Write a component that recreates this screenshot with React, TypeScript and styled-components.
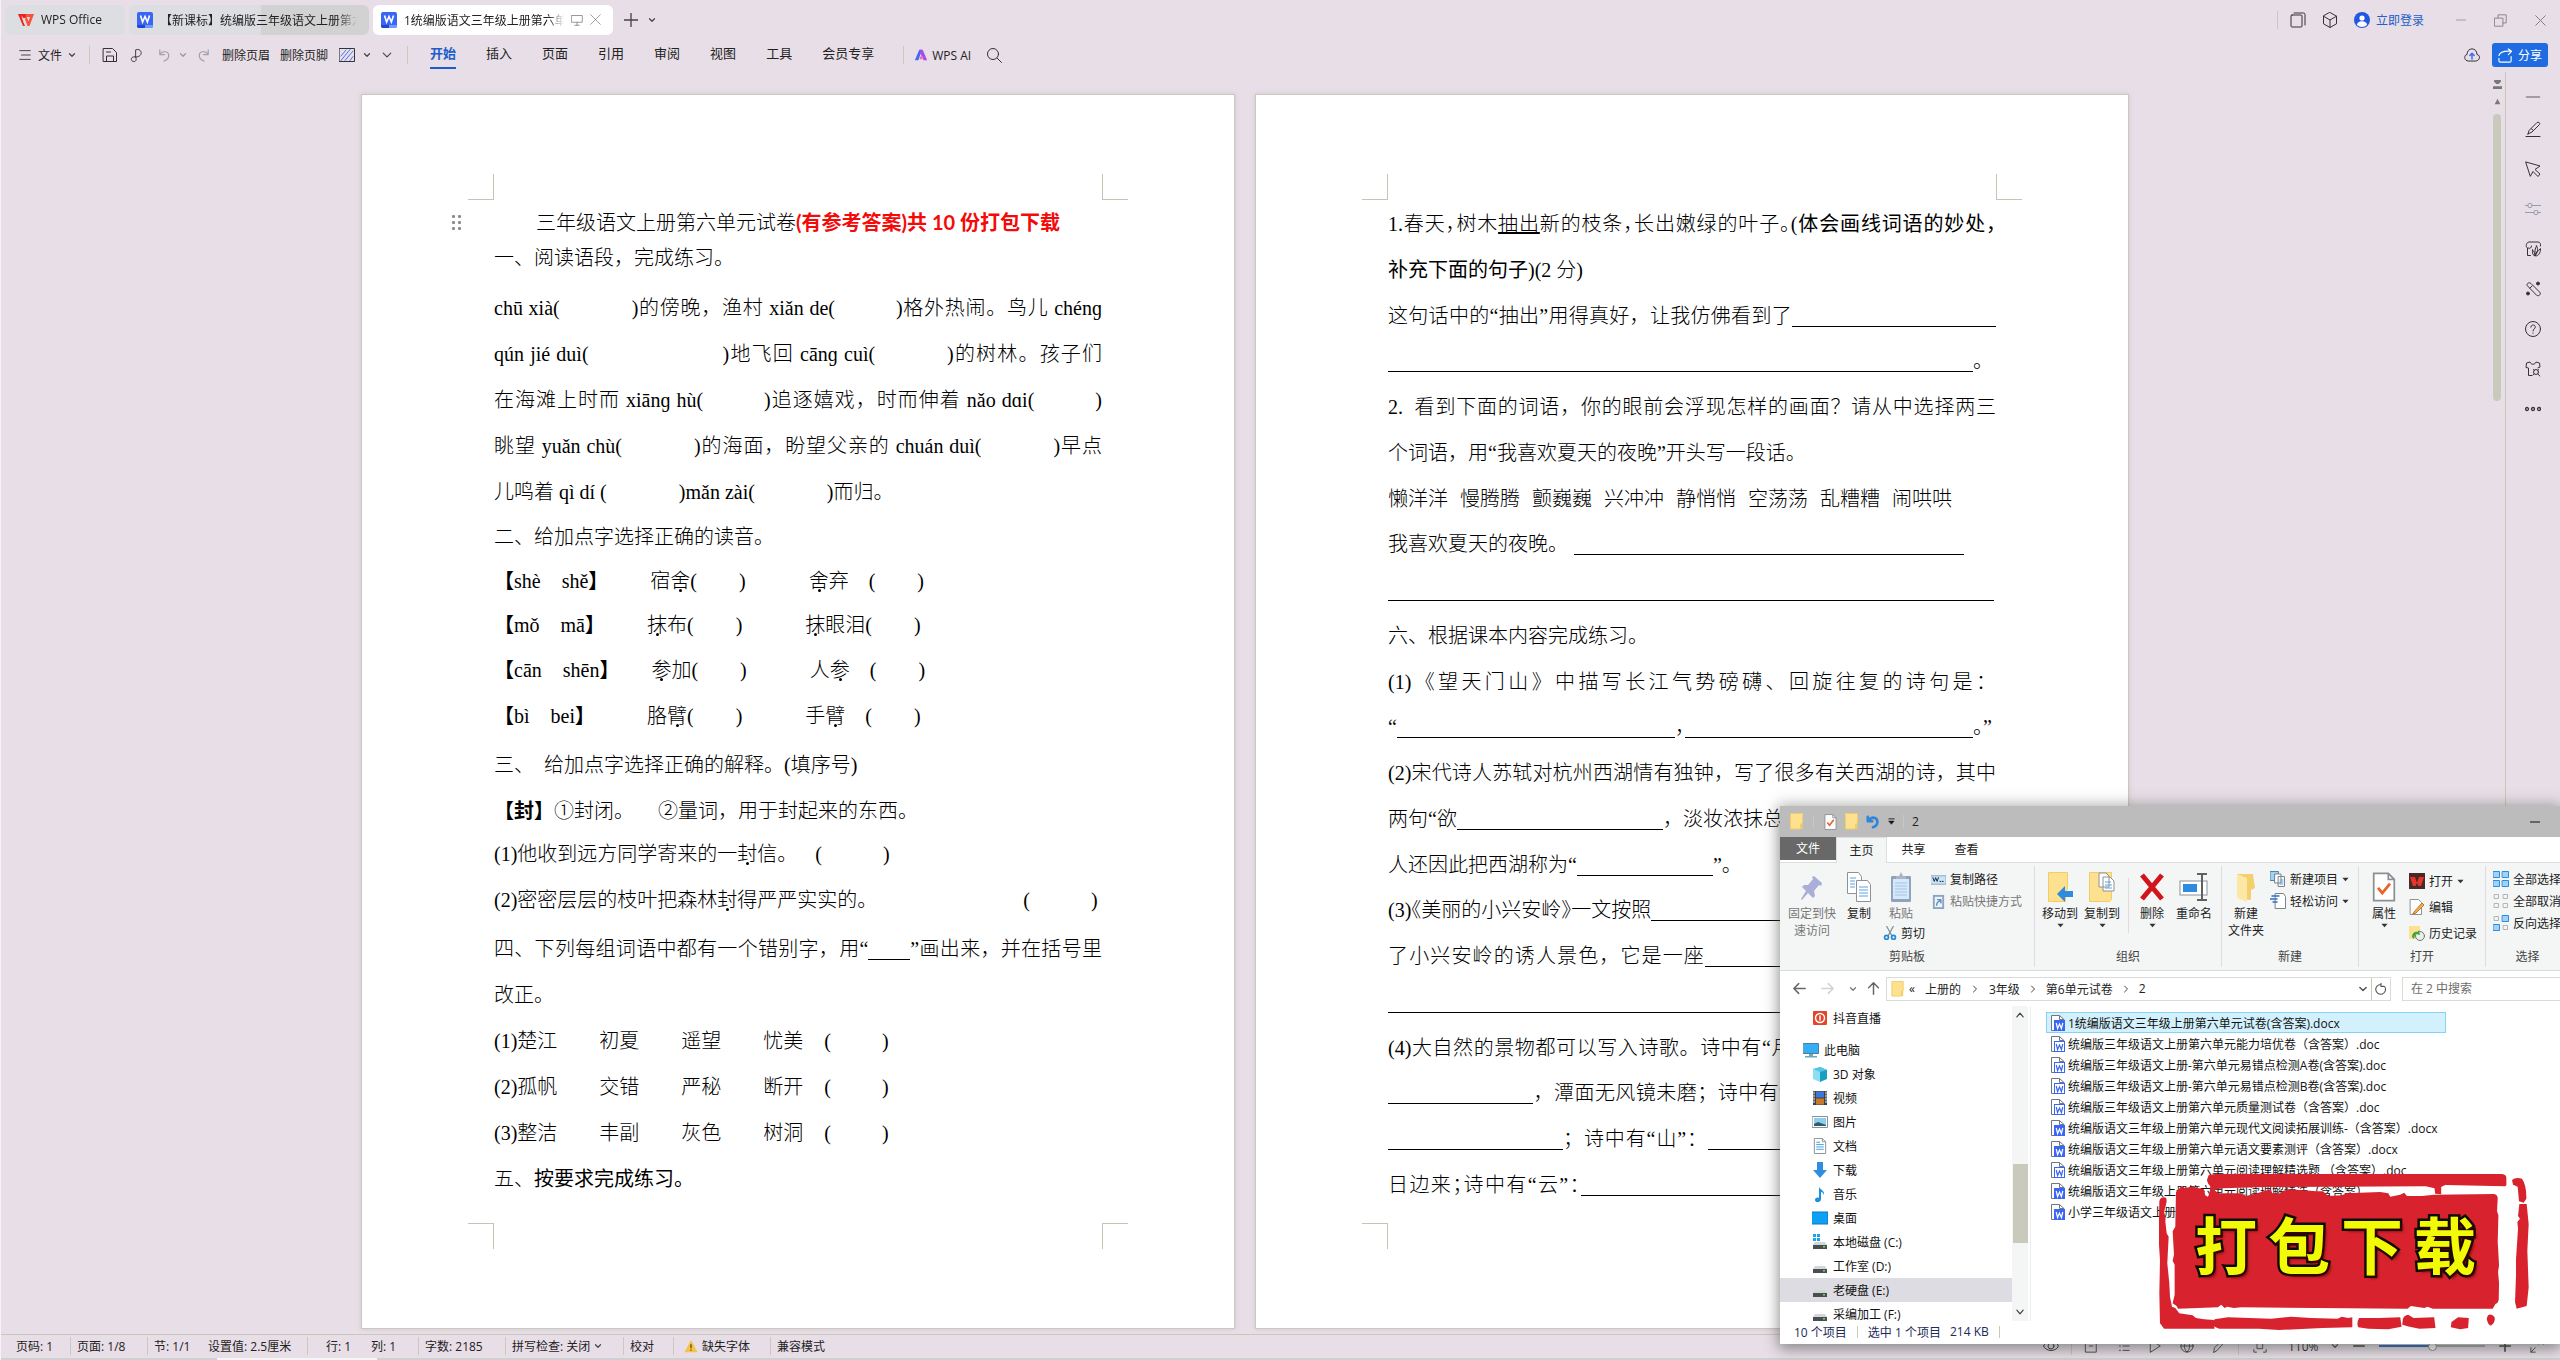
import React from 'react';
import styled, { createGlobalStyle } from 'styled-components';

const UI_FONT = '"Open Sans", "Noto Sans CJK SC", sans-serif';
const DOC_FONT = '"Liberation Serif", "Noto Sans CJK SC", serif';

const Global = createGlobalStyle`
  * { box-sizing: border-box; }
  html, body { margin: 0; padding: 0; }
  body { background: #e8dee7; font-family: ${UI_FONT}; font-size: 12px; color: #222; }
  button { font: inherit; color: inherit; border: 0; background: none; padding: 0; margin: 0; cursor: pointer; }
  svg { display: block; flex: none; }
  p { margin: 0; }
`;

/* ---------- icons ---------- */

type IconProps = { s?: number; c?: string; w?: number; label?: string; children?: React.ReactNode };
const Icon = ({ s = 16, c = '#333', w = 1, children }: IconProps) => (
  <svg width={s} height={s} viewBox="0 0 16 16" fill="none" stroke={c} strokeWidth={w} strokeLinecap="round" strokeLinejoin="round" aria-hidden="true">
    {children}
  </svg>
);
const Caret = ({ s = 8, c = '#444', w = 2.4 }: IconProps) => <Icon s={s} c={c} w={w}><path d="M3 5.5l5 5 5-5" /></Icon>;
const Tri = () => <Icon s={7} c="none"><path d="M1 4h14l-7 8z" fill="#333" /></Icon>;

const WpsLogo = () => (
  <Icon s={16} c="none">
    <path d="M0 2h9l-1.500 4H5l-.6-1.500H3.500l2 6L7 14H5z" fill="#e8261c" />
    <path d="M9 2h7l-4.500 12H9.500L7 7l1.500-3 2 5.500L12 5H8z" fill="#f5533a" />
  </Icon>
);
const WordIcon = ({ s = 16 }: IconProps) => (
  <svg width={s} height={s} viewBox="0 0 16 16" aria-hidden="true">
    <rect width="16" height="16" rx="2" fill="#3a66f5" />
    <path d="M0 13h8v3H2a2 2 0 01-2-2z" fill="#1f48cf" /><path d="M8 13h8v1a2 2 0 01-2 2H8z" fill="#6f9bff" />
    <path d="M3.500 3.500L5.600 10 8 4.500 10.400 10l2.100-6.500" fill="none" stroke="#fff" strokeWidth="1.600" />
  </svg>
);
const FolderIcon = ({ w = 13, h = 17 }: { w?: number; h?: number }) => (
  <svg width={w} height={h} viewBox="0 0 13 17" aria-hidden="true">
    <path d="M0.500 0.500h12v10l-2 1v4.500h-10z" fill="#fde18f" stroke="#f1cd6a" />
    <path d="M10.500 10.500v5.500h2v-5.500z" fill="#f1cd6a" />
  </svg>
);
const PageIcon = ({ w = 14, h = 17, children }: { w?: number; h?: number; children?: React.ReactNode }) => (
  <svg width={w} height={h} viewBox="0 0 14 17" fill="none" aria-hidden="true">
    <path d="M1 .5h8.500L13 4v12.500H1z" fill="#fff" stroke="#8a8f94" /><path d="M9.500 .5V4H13" stroke="#8a8f94" />
    {children}
  </svg>
);
const FileDoc = ({ solid }: { solid?: boolean }) => (
  <svg width="14" height="16" viewBox="0 0 14 16" fill="none" aria-hidden="true">
    <path d="M.5.500h8L13 4.500v11H.5z" fill="#fff" stroke="#6f7680" /><path d="M8.500.500v4H13" stroke="#6f7680" />
    <rect x="3.500" y="5.500" width="10" height="10" fill={solid ? '#3a66f5' : '#fff'} stroke="#3a66f5" />
    <path d="M5.200 8l1.400 5.500L8.500 9l1.900 4.500L11.800 8" stroke={solid ? '#fff' : '#3a66f5'} strokeWidth="1.200" />
  </svg>
);
const Undo = ({ c = '#a79fa8', flip }: { c?: string; flip?: boolean }) => (
  <Icon s={15} c={c} w={1.3}>
    <g transform={flip ? 'translate(16 0) scale(-1 1)' : undefined}><path d="M3 2v5h5M3.300 6.700C6 2.500 12.500 3.300 12.500 8c0 3-2.500 5-5 6" /></g>
  </Icon>
);
const DriveIcon = ({ win }: { win?: boolean }) => (
  <Icon s={16} c="none">
    {win && <g fill="#19a5ee"><path d="M1 0h3v3H1zM5 0h3v3H5zM1 4h3v3H1zM5 4h3v3H5z" /></g>}
    <path d="M3 8h10l2 3H1z" fill="#d4d6d8" /><path d="M1 11h14v4H1z" fill="#4b4d50" /><path d="M11 12h2v1.500h-2z" fill="#5be06a" />
  </Icon>
);

/* ---------- application frame ---------- */

const Shell = styled.div`
  position: relative; display: flex; flex-direction: column; height: 100vh; overflow: hidden;
  background: #e8dee7; border-left: 1px solid #f6f2f6;
`;
const TitleBar = styled.header`display: flex; align-items: center; height: 38px; padding: 2px 3px 0 4px;`;
const DocTab = styled.button<{ $w: number; $bg: string; $home?: boolean }>`
  display: flex; align-items: center; gap: 7px; width: ${p => p.$w}px; height: 30px; margin-right: 4px;
  padding: 0 12px 1px ${p => (p.$home ? 13 : 8)}px;
  border-radius: 6px; background: ${p => p.$bg}; color: #222; text-align: left; white-space: nowrap;
`;
const TabText = styled.span`
  flex: 1; overflow: hidden;
  mask-image: linear-gradient(to right, #000 90%, transparent);
`;
const Slot = styled.button<{ $w: number }>`
  display: inline-flex; align-items: center; justify-content: center; flex: none; width: ${p => p.$w}px; height: 24px;
`;
const Push = styled.div`flex: 1;`;
const Sep = styled.span<{ $m?: number; $h?: number }>`
  flex: none; width: 1px; height: ${p => p.$h ?? 18}px; margin: 0 ${p => p.$m ?? 7}px; background: #cbc9ba;
`;
const Login = styled.button`display: flex; align-items: center; gap: 6px; margin: 0 21px 0 5px; color: #245fc8;`;

const ToolRow = styled.div`display: flex; align-items: center; height: 34px; padding: 0 12px 0 17px;`;
const FileMenu = styled.button`display: flex; align-items: center; gap: 6px; width: 64px;`;
const TextTool = styled.button`padding: 0 5px; white-space: nowrap;`;
const RibbonNav = styled.nav`display: flex; margin-right: 7px;`;
const RibbonTab = styled.button<{ $on?: boolean }>`
  height: 28px; padding: 0 15px; font-size: 13px; font-weight: ${p => (p.$on ? 700 : 400)};
  color: ${p => (p.$on ? '#1d5cc9' : '#222')};
  span { display: block; height: 28px; line-height: 25px; border-bottom: 2px solid ${p => (p.$on ? '#1d5cc9' : 'transparent')}; }
`;
const AiButton = styled.button`display: flex; align-items: center; gap: 4px; padding: 0 3px; white-space: nowrap;`;
const ShareButton = styled.button`
  display: flex; align-items: center; justify-content: center; gap: 5px; width: 56px; height: 24px; margin-left: 6px;
  border-radius: 3px; background: #1f6be2; color: #fff;
`;

const Workspace = styled.div`flex: 1; display: flex; min-height: 0;`;
const Desk = styled.main`flex: 1; display: flex; justify-content: center; gap: 20px; padding: 22px 0 5px;`;
const ScrollRail = styled.div`
  display: flex; flex-direction: column; align-items: center; gap: 8px; width: 16px; padding-top: 8px;
`;
const ScrollThumb = styled.div`width: 8px; height: 287px; border-radius: 4px; background: #c9cabb;`;
const SideBar = styled.aside`
  display: flex; flex-direction: column; align-items: center; width: 55px; padding-top: 13px; border-left: 1px solid #c9c8b8;
`;
const SideButton = styled.button`
  display: flex; align-items: center; justify-content: center; width: 40px; height: 40px;
  &:first-child { height: 24px; }
`;

/* ---------- document pages ---------- */

const Page = styled.article`
  position: relative; display: flex; flex-direction: column; width: 874px; background: #fff;
  border: 1px solid #c9cabb; box-shadow: 0 0 4px rgba(120, 130, 120, 0.25);
  font-family: ${DOC_FONT}; font-size: 20px; color: #000;
`;
const Margin = styled.div<{ $foot?: boolean }>`
  display: flex; justify-content: space-between; align-items: ${p => (p.$foot ? 'flex-start' : 'flex-end')};
  height: 105px; padding: 0 106px;
`;
const Crop = styled.span<{ $right?: boolean; $foot?: boolean }>`
  width: 26px; height: 26px; border: 0 solid #c4c5b5;
  border-${p => (p.$right ? 'left' : 'right')}-width: 1px;
  border-${p => (p.$foot ? 'top' : 'bottom')}-width: 1px;
`;
const Body = styled.div<{ $spread?: boolean }>`
  flex: 1; display: flex; flex-direction: column; justify-content: ${p => (p.$spread ? 'space-between' : 'flex-start')};
  padding: ${p => (p.$spread ? '2px 132px 15px' : '0 132px')};
`;
const Line = styled.p<{ $h?: number; $gap?: number; $fill?: boolean; $center?: boolean; $half?: boolean }>`
  height: ${p => p.$h ?? 46}px; line-height: ${p => p.$h ?? 46}px; margin-top: ${p => p.$gap ?? 0}px;
  white-space: pre-wrap; font-weight: 300;
  text-align-last: ${p => (p.$fill ? 'justify' : p.$center ? 'center' : 'left')};
  ${p => p.$half && 'font-feature-settings: "halt";'}
`;
const Gap = styled.span<{ $w: number }>`display: inline-block; flex: none; width: ${p => p.$w}px;`;
const Rule = styled.span<{ $w: number }>`
  display: inline-block; width: ${p => p.$w}px; height: 20px; vertical-align: -4px; border-bottom: 1px solid #000;
`;
const Red = styled.strong`color: #f50a0a; font-family: Lato, "Noto Sans CJK SC", sans-serif; font-weight: 700;`;
const Strong = styled.strong`font-weight: 700;`;
const Hei = styled.span`font-weight: 400;`;
const Dot = styled.span`
  position: relative;
  &::after {
    content: ''; position: absolute; left: 50%; bottom: 0; width: 3px; height: 3px; margin-left: -1px;
    border-radius: 50%; background: #000;
  }
`;
const DragHandle = styled.span`
  position: absolute; left: 90px; top: 120px; display: grid; grid-template-columns: 3px 3px; gap: 3px;
  i { width: 3px; height: 3px; background: #8c8c8c; border-radius: 1px; }
`;
const Words = styled.span`display: inline-flex; gap: 12px;`;

const Sheet = ({ spread, children }: { spread?: boolean; children: React.ReactNode }) => (
  <Page>
    <Margin><Crop /><Crop $right /></Margin>
    <Body $spread={spread}>{children}</Body>
    <Margin $foot><Crop $foot /><Crop $foot $right /></Margin>
  </Page>
);

/* ---------- status bar ---------- */

const StatusBar = styled.footer`
  display: flex; align-items: center; height: 24px; padding: 0 5px 1px 15px; border-top: 1px solid #c9c8b8; white-space: nowrap;
`;
const StatusItem = styled.button<{ $w: number }>`
  display: flex; align-items: center; gap: 4px; flex: none; width: ${p => p.$w}px;
`;
const Taskbar = styled.div`
  height: 2px; background: #d0d0d0;
  &::before { content: ''; display: block; width: 160px; height: 2px; margin-left: 216px; background: #f6f6f6; }
`;
const ZoomSlider = styled.input`
  appearance: none; flex: none; width: 106px; height: 12px; margin: 0 6px 0 7px;
  background: linear-gradient(to right, #1f5fd0 50%, #a9a7ab 50%) center / 100% 2px no-repeat;
  &::-webkit-slider-thumb { appearance: none; width: 9px; height: 9px; border-radius: 50%; background: #fff; border: 1px solid #888; }
`;

/* ---------- file explorer ---------- */

const Explorer = styled.section`
  position: absolute; right: 0; bottom: 16px; display: flex; flex-direction: column; width: 780px; height: 538px; overflow: hidden;
  background: #fff;
`;
const ExplorerShade = styled.div`
  position: absolute; right: 0; bottom: 16px; width: 780px; height: 538px;
  box-shadow: 0 0 14px 2px rgba(90, 95, 90, 0.4), 0 6px 12px rgba(60, 65, 60, 0.35);
`;
const ExTitle = styled.header`
  display: flex; align-items: center; flex: none; height: 31px; padding: 0 20px 0 10px; gap: 8px; background: #bcbcbc;
`;
const ExTabs = styled.nav`display: flex; flex: none; height: 26px; border-bottom: 1px solid #dcdfe0;`;
const ExTab = styled.button<{ $kind?: 'file' | 'on' }>`
  width: ${p => (p.$kind === 'file' ? 56 : p.$kind === 'on' ? 51 : 53)}px; height: ${p => (p.$kind === 'file' ? 23 : 26)}px;
  padding-bottom: 2px;
  color: ${p => (p.$kind === 'file' ? '#fff' : '#222')};
  background: ${p => (p.$kind === 'file' ? '#686868' : p.$kind === 'on' ? '#f4f6f6' : 'none')};
  border: ${p => (p.$kind === 'on' ? '1px solid #dcdfe0' : '0')}; border-bottom: 0;
`;
const Ribbon = styled.div`
  display: flex; flex: none; height: 108px; padding: 3px 0; background: #f4f6f6; border-bottom: 1px solid #d9dbdc; overflow: hidden;
`;
const Group = styled.div<{ $w: number }>`
  display: flex; flex-direction: column; justify-content: space-between; flex: none; width: ${p => p.$w}px;
  border-right: 1px solid #e3d9de;
`;
const GroupRow = styled.div<{ $pad?: number }>`display: flex; padding-left: ${p => p.$pad ?? 0}px;`;
const GroupName = styled.div`line-height: 16px; padding-bottom: 2px; text-align: center; color: #444;`;
const Big = styled.button<{ $w: number; $dim?: boolean }>`
  display: flex; flex-direction: column; align-items: center; flex: none; width: ${p => p.$w}px; padding-top: 6px;
  line-height: 17px; color: ${p => (p.$dim ? '#777' : '#222')}; white-space: nowrap;
  > svg:first-child { margin-bottom: 3px; }
`;
const PasteStack = styled.div`display: flex; flex-direction: column; align-items: flex-end;`;
const Col = styled.div`display: flex; flex-direction: column; padding-top: 2px;`;
const Small = styled.button<{ $h?: number; $dim?: boolean }>`
  display: flex; align-items: center; gap: 4px; height: ${p => p.$h ?? 22}px; padding: 0 3px; white-space: nowrap;
  color: ${p => (p.$dim ? '#777' : '#222')};
`;
const Split = styled.span`width: 1px; height: 55px; margin: 12px 4px 0 5px; background: #e3d9de;`;
const AddressRow = styled.div`display: flex; align-items: center; flex: none; height: 35px; padding-left: 8px;`;
const Address = styled.div`
  display: flex; align-items: center; flex: none; width: 505px; height: 24px; margin: 0 11px 0 2px; padding-left: 4px; border: 1px solid #dadada;
`;
const Crumb = styled.button`padding: 0 5px; white-space: nowrap;`;
const SearchBox = styled.input`
  flex: none; width: 190px; height: 24px; padding: 0 8px; border: 1px solid #dadada; font: inherit; color: #222;
  &::placeholder { color: #6d6d6d; opacity: 1; }
`;
const ExMain = styled.div`flex: 1; display: flex; min-height: 0;`;
const Tree = styled.nav`display: flex; flex-direction: column; width: 232px; overflow: hidden;`;
const TreeItem = styled.button<{ $root?: boolean; $on?: boolean }>`
  display: flex; align-items: center; gap: 5px; flex: none; height: 24px; margin-top: ${p => (p.$root ? 8 : 0)}px;
  padding-left: ${p => (p.$root ? 23 : 32)}px; background: ${p => (p.$on ? '#dcdce2' : 'none')}; text-align: left; color: #111;
`;
const TreeScroll = styled.div`
  display: flex; flex-direction: column; align-items: center; width: 16px; margin-right: 2px; padding: 4px 0; background: #f4f6f6;
`;
const TreeThumb = styled.div`width: 15px; height: 79px; margin: 144px 0 auto; background: #c9cabb;`;
const Files = styled.ul`flex: 1; margin: 0; padding: 6px 0 0 15px; list-style: none; border-left: 1px solid #eceeee;`;
const FileRow = styled.li<{ $on?: boolean }>`
  width: 400px; height: 21px; border: 1px solid ${p => (p.$on ? '#86d2f6' : 'transparent')}; background: ${p => (p.$on ? '#d3f1fd' : 'none')};
  a { display: flex; align-items: center; gap: 3px; height: 19px; padding-left: 4px; color: #111; text-decoration: none; white-space: nowrap; }
`;
const ExStatus = styled.footer`display: flex; align-items: center; flex: none; height: 23px; padding: 0 0 2px 14px; color: #1b2a58;`;

/* ---------- stamp ---------- */

const Stamp = styled.div`
  position: absolute; right: 31px; bottom: 30px; width: 370px; height: 156px;
  > svg { position: absolute; inset: 0; width: 100%; height: 100%; }
`;
const StampText = styled.div`
  position: relative; display: flex; gap: 11px; padding: 28px 0 0 36px; line-height: 82px;
  font-family: "Noto Sans CJK SC", sans-serif; font-size: 62px; font-weight: 700; color: #f2fb06;
  -webkit-text-stroke: 5px #0d0d00; paint-order: stroke fill; text-shadow: 3px 3px 3px rgba(80, 0, 0, 0.6);
`;

const files: [string, boolean][] = [
  ['1统编版语文三年级上册第六单元试卷(含答案).docx', true],
  ['统编版三年级语文上册第六单元能力培优卷（含答案）.doc', false],
  ['统编版三年级语文上册-第六单元易错点检测A卷(含答案).doc', false],
  ['统编版三年级语文上册-第六单元易错点检测B卷(含答案).doc', false],
  ['统编版三年级语文上册第六单元质量测试卷（含答案）.doc', false],
  ['统编版语文三年级上册第六单元现代文阅读拓展训练-（含答案）.docx', true],
  ['统编版语文三年级上册第六单元语文要素测评（含答案）.docx', true],
  ['统编版语文三年级上册第六单元阅读理解精选题 （含答案）.doc', false],
  ['统编版语文三年级上册第六单元阅读理解精选（含答案）', true],
  ['小学三年级语文上册', true],
];

const folders: { name: string; icon: React.ReactNode; root?: boolean; on?: boolean }[] = [
  { name: '抖音直播', icon: <Icon c="#fff" w={1.5}><rect x="1" y="1" width="14" height="14" rx="1" fill="#e2472a" stroke="none" /><circle cx="8" cy="8" r="4.500" /><path d="M8 6v4" /></Icon> },
  { name: '此电脑', root: true, icon: <Icon c="none"><rect x="0.500" y="1.500" width="15" height="10" fill="#35aef5" stroke="#4c7f9f" /><path d="M6 12h4v2H6zM2 14h12v1.500H2z" fill="#6fa7ba" /></Icon> },
  { name: '3D 对象', icon: <Icon c="none"><path d="M1 3l7-2v15l-7-3z" fill="#8ddff0" /><path d="M8 1l7 3v9l-7 3z" fill="#1a9fc4" /><path d="M1 3l7-2 7 3-7 2z" fill="#52c6e2" /></Icon> },
  { name: '视频', icon: <Icon c="none"><rect x="1" y="1" width="14" height="14" fill="#3b4046" /><rect x="4" y="1.500" width="8" height="6" fill="#3c78d8" /><rect x="4" y="8.500" width="8" height="6" fill="#c77a2c" /><path d="M2 2v12M14 2v12" stroke="#fff" strokeDasharray="1.500 1.500" /></Icon> },
  { name: '图片', icon: <Icon c="none"><rect x="0.500" y="2.500" width="15" height="11" fill="#fff" stroke="#8a8f94" /><rect x="2" y="4" width="12" height="8" fill="#8fcdf0" /><path d="M2 10l4-2 8 3v1H2z" fill="#2d5d6b" /></Icon> },
  { name: '文档', icon: <PageIcon w={16} h={16}><path d="M3 7h8M3 9.500h8M3 12h8M3 4.500h4" stroke="#3b9cd9" /></PageIcon> },
  { name: '下载', icon: <Icon c="none"><path d="M5 0h6v8h4l-7 8-7-8h4z" fill="#2f8ee0" /></Icon> },
  { name: '音乐', icon: <Icon c="none"><path d="M7 0c0 4 6 4 5 9-.5-2-2-3-3-3v7c0 4-6 4-6 1 0-2 2-3 4-2z" fill="#1b8fe0" /></Icon> },
  { name: '桌面', icon: <Icon c="none"><rect y="2" width="16" height="12" fill="#0ea0f5" stroke="#0877bd" /></Icon> },
  { name: '本地磁盘 (C:)', icon: <DriveIcon win /> },
  { name: '工作室 (D:)', icon: <DriveIcon /> },
  { name: '老硬盘 (E:)', icon: <DriveIcon />, on: true },
  { name: '采编加工 (F:)', icon: <DriveIcon /> },
];

const ribbonTabs = ['开始', '插入', '页面', '引用', '审阅', '视图', '工具', '会员专享'];

const sideIcons: [string, React.ReactNode][] = [
  ['收起', <Icon c="#8d878d" w={1.600}><path d="M1.500 8h13" /></Icon>],
  ['画笔', <Icon><path d="M1 15.500h14M3 13l1-3.500L12 1.500c1.500-1 3.500.5 2.500 2L7 11l-4 2zM6.500 8l2 1.500" /></Icon>],
  ['选择', <Icon><path d="M1 1l14 4-5 3.500 5 4.500-2 2.500-5-5L5.500 15z" /></Icon>],
  ['设置', <Icon c="#98a0a5"><path d="M0 4.500h3M7 4.500h9M0 11.500h9M13 11.500h3" /><circle cx="5" cy="4.500" r="2.200" /><circle cx="11" cy="11.500" r="2.200" /></Icon>],
  ['模板', <Icon><path d="M5.500 14.500h-3V7c-2.500-1-1-6 1.500-6h9c2 0 3 2 2.500 4M3 7c2 1 3.500 0 3.500-2M7.500 9c2 1 2.500 4 2 6-2-1-2.500-4-2-6zM11.500 5c2 3 1 7-1 9-1-3-.5-7 1-9zM15.500 8c0 4-2 7-5 7 0-3 2-6 5-7z" /></Icon>],
  ['魔法棒', <Icon><path d="M2 4c0-2 2-3 4-1.500l9 9c1 2-1 4-3 3zM5 7l2-2" /><circle cx="13" cy="2.500" r="1.500" fill="#333" /><circle cx="3" cy="12.500" r="1.500" fill="#333" /></Icon>],
  ['帮助', <Icon><circle cx="8" cy="8" r="7.500" /><path d="M5.800 6.200C5.800 3 10.500 3.300 10.300 6.200 10.200 7.800 8 7.800 8 10M8 12v.3" /></Icon>],
  ['换肤', <Icon><path d="M7 14.500H3.500V7L1 6.500 1.500 2 5 1c1 3 5 3 6 0l3.500 1 .5 4-2 .8" /><circle cx="11" cy="11" r="2.500" /><path d="M8.500 8.500l1 1M13.500 8.500l-1 1M12.800 12.800l2 2.200M9 13l-1 1" /></Icon>],
  ['更多', <Icon w={1.300}><circle cx="2" cy="8" r="1.500" /><circle cx="8" cy="8" r="1.500" /><circle cx="14" cy="8" r="1.500" /></Icon>],
];

export default function App() {
  return (
    <Shell>
      <Global />
      <TitleBar>
        <DocTab $w={120} $bg="#dcdee2" $home><WpsLogo /><TabText>WPS Office</TabText></DocTab>
        <DocTab $w={240} $bg="linear-gradient(to right, #dcdee2 55%, #d2d2d3 55%)"><WordIcon /><TabText>【新课标】统编版三年级语文上册第六单元</TabText></DocTab>
        <DocTab $w={240} $bg="#fff">
          <WordIcon /><TabText>1统编版语文三年级上册第六单元</TabText>
          <Icon s={12} c="#777"><path d="M1 2h14v9H1zM8 11v4M5 15h6" /></Icon>
          <Icon s={11} c="#777"><path d="M1 1l14 14M15 1L1 15" /></Icon>
        </DocTab>
        <Slot $w={28} aria-label="新建标签"><Icon s={14} c="#444" w={1.500}><path d="M8 0v16M0 8h16" /></Icon></Slot>
        <Slot $w={14} aria-label="标签列表"><Caret /></Slot>
        <Push />
        <Sep />
        <Slot $w={26} aria-label="工作区"><Icon><rect x="1" y="3" width="11" height="12" rx="1" /><path d="M4 1h9.500a1.500 1.500 0 011.500 1.500V13" /></Icon></Slot>
        <Slot $w={38} aria-label="应用"><Icon><path d="M8 .500l6.500 3.700v7.600L8 15.500l-6.500-3.700V4.200zM1.500 4.200L8 8l6.500-3.800M8 8v7.500" /></Icon></Slot>
        <Login>
          <Icon c="none"><circle cx="8" cy="8" r="8" fill="#2457e0" /><circle cx="8" cy="6" r="2.600" fill="#fff" /><path d="M3 13c0-5 10-5 10 0-3 2.500-7 2.500-10 0z" fill="#fff" /></Icon>
          立即登录
        </Login>
        <Slot $w={32} aria-label="最小化"><Icon s={10} c="#777"><path d="M0 8h16" /></Icon></Slot>
        <Slot $w={46} aria-label="还原"><Icon s={13} c="#777"><path d="M1 5h10v10H1zM5 5V1h10v10h-4" /></Icon></Slot>
        <Slot $w={34} aria-label="关闭"><Icon s={11} c="#7f7f72" w={1.400}><path d="M1 1l14 14M15 1L1 15" /></Icon></Slot>
      </TitleBar>

      <ToolRow>
        <FileMenu><Icon s={14}><path d="M2 3h12M4 8h10M2 13h12" /></Icon>文件<Caret /></FileMenu>
        <Sep />
        <Slot $w={26} aria-label="保存"><Icon><path d="M1.500 1.500h9l4 4v9h-13zM4.500 14V9h7v5M4.500 5h4" /></Icon></Slot>
        <Slot $w={28} aria-label="查找"><Icon s={15}><path d="M6 9.500V2c6-2.500 9 6 1.500 7.500H4c-4 .5-3 5 0 5s3-3 2-5" /></Icon></Slot>
        <Slot $w={26} aria-label="撤销"><Undo /></Slot>
        <Slot $w={12} aria-label="撤销列表"><Caret c="#999" /></Slot>
        <Slot $w={28} aria-label="恢复"><Undo flip /></Slot>
        <TextTool>删除页眉</TextTool>
        <TextTool>删除页脚</TextTool>
        <Slot $w={28} aria-label="底纹"><Icon c="#333"><rect x="0.500" y="1.500" width="15" height="13" /><path d="M2 9l5-6M2 13.500l9-11M6 13.500L14 4M11 13.500l3-4" stroke="#4a78f0" /></Icon></Slot>
        <Slot $w={12} aria-label="底纹列表"><Caret /></Slot>
        <Slot $w={27} aria-label="更多工具"><Caret s={12} w={1.500} /></Slot>
        <Sep />
        <RibbonNav>{ribbonTabs.map((t, i) => <RibbonTab key={t} $on={i === 0}><span>{t}</span></RibbonTab>)}</RibbonNav>
        <Sep />
        <AiButton>
          <Icon s={14} c="none"><path d="M1 14L6 2h3L5 14z" fill="#3d6bf6" /><path d="M7 2h3l5 12h-4L7 6z" fill="#a44cf0" /><path d="M6 10l4-1 1 3-4 1z" fill="#f46ab4" /></Icon>
          WPS AI
        </AiButton>
        <Slot $w={40} aria-label="搜索"><Icon><circle cx="7" cy="7" r="5.500" /><path d="M11 11l4.500 4.500" /></Icon></Slot>
        <Push />
        <Slot $w={28} aria-label="云同步"><Icon><path d="M4 14C-.5 13.500 0 8 3 7.500 3 0 13 0 13 7.500c3.500.5 3.500 6-1 6.500z" /><path d="M8 12V6.500M5.800 8.500L8 6.300l2.200 2.200" stroke="#3d6bf6" strokeWidth="1.500" /></Icon></Slot>
        <ShareButton><Icon s={15} c="#fff" w={1.200}><path d="M1 8c1-4 6-5 13-4.500M11 1l3.500 2.500L11 7M1 11v2.500c0 1 .5 1.500 1.500 1.500h10c1 0 1.500-.5 1.500-1.500V9" /></Icon>分享</ShareButton>
      </ToolRow>

      <Workspace>
        <Desk>
          <Sheet>
            <DragHandle><i /><i /><i /><i /><i /><i /></DragHandle>
            <Line $h={45} $center>三年级语文上册第六单元试卷<Red>(有参考答案)共 10 份打包下载</Red></Line>
            <Line $h={26}>一、阅读语段，完成练习。</Line>
            <Line $gap={14} $fill>chū xià(<Gap $w={72} />)的傍晚，渔村 xiǎn de(<Gap $w={61} />)格外热闹。鸟儿 chénɡ</Line>
            <Line $fill>qún jié duì(<Gap $w={134} />)地飞回 cānɡ cuì(<Gap $w={72} />)的树林。孩子们</Line>
            <Line $fill>在海滩上时而 xiānɡ hù(<Gap $w={61} />)追逐嬉戏，时而伸着 nǎo dɑi(<Gap $w={61} />)</Line>
            <Line $fill>眺望 yuǎn chù(<Gap $w={72} />)的海面，盼望父亲的 chuán duì(<Gap $w={72} />)早点</Line>
            <Line>儿鸣着 qì dí (<Gap $w={72} />)mǎn zài(<Gap $w={72} />)而归。</Line>
            <Line $h={44}>二、给加点字选择正确的读音。</Line>
            <Line $h={44}><Strong>【</Strong>shè<Gap $w={21} />shě<Strong>】</Strong><Gap $w={42} />宿<Dot>舍</Dot>(<Gap $w={42} />)<Gap $w={63} /><Dot>舍</Dot>弃<Gap $w={20} />(<Gap $w={42} />)</Line>
            <Line $h={44}><Strong>【</Strong>mǒ<Gap $w={21} />mā<Strong>】</Strong><Gap $w={42} /><Dot>抹</Dot>布(<Gap $w={42} />)<Gap $w={63} /><Dot>抹</Dot>眼泪(<Gap $w={42} />)</Line>
            <Line><Strong>【</Strong>cān<Gap $w={21} />shēn<Strong>】</Strong><Gap $w={32} /><Dot>参</Dot>加(<Gap $w={42} />)<Gap $w={63} />人<Dot>参</Dot><Gap $w={20} />(<Gap $w={42} />)</Line>
            <Line><Strong>【</Strong>bì<Gap $w={21} />bei<Strong>】</Strong><Gap $w={52} />胳<Dot>臂</Dot>(<Gap $w={42} />)<Gap $w={63} />手<Dot>臂</Dot><Gap $w={20} />(<Gap $w={42} />)</Line>
            <Line $gap={3}>三、  给加点字选择正确的解释。(填序号)</Line>
            <Line><Strong>【封】</Strong>①封闭。<Gap $w={24} />②量词，用于封起来的东西。</Line>
            <Line $h={40}>(1)他收到远方同学寄来的一<Dot>封</Dot>信。<Gap $w={18} />(<Gap $w={61} />)</Line>
            <Line $gap={3}>(2)密密层层的枝叶把森林<Dot>封</Dot>得严严实实的。<Gap $w={146} />(<Gap $w={61} />)</Line>
            <Line $gap={3} $fill>四、下列每组词语中都有一个错别字，用“<Rule $w={42} />”画出来，并在括号里</Line>
            <Line>改正。</Line>
            {[['(1)楚江', '初夏', '遥望', '忧美'], ['(2)孤帆', '交错', '严秘', '断开'], ['(3)整洁', '丰副', '灰色', '树洞']].map(r => (
              <Line key={r[0]}>{r[0]}<Gap $w={42} />{r[1]}<Gap $w={42} />{r[2]}<Gap $w={42} />{r[3]}<Gap $w={21} />(<Gap $w={51} />)</Line>
            ))}
            <Line>五、<Hei>按要求完成练习。</Hei></Line>
          </Sheet>

          <Sheet spread>
            <Line $h={45} $fill $half>1.春天，树木<u>抽出</u>新的枝条，长出嫩绿的叶子。(<Hei>体会画线词语的妙处，</Hei></Line>
            <Line $h={45}><Hei>补充下面的句子</Hei>)(2 分)</Line>
            <Line $h={45} $fill>这句话中的“抽出”用得真好，让我仿佛看到了<Rule $w={204} /></Line>
            <Line $h={45}><Rule $w={585} />。</Line>
            <Line $h={45} $fill>2.  看到下面的词语，你的眼前会浮现怎样的画面？请从中选择两三</Line>
            <Line $h={45}>个词语，用“我喜欢夏天的夜晚”开头写一段话。</Line>
            <Line $h={45}>
              <Words>{['懒洋洋', '慢腾腾', '颤巍巍', '兴冲冲', '静悄悄', '空荡荡', '乱糟糟', '闹哄哄'].map(w => <span key={w}>{w}</span>)}</Words>
            </Line>
            <Line $h={45}>我喜欢夏天的夜晚。<Gap $w={6} /><Rule $w={390} /></Line>
            <Line $h={45}><Rule $w={606} /></Line>
            <Line $h={45}>六、根据课本内容完成练习。</Line>
            <Line $h={45} $fill>(1)《望天门山》中描写长江气势磅礴、回旋往复的诗句是：</Line>
            <Line $h={45} $half>“<Rule $w={278} />，<Rule $w={288} />。”</Line>
            <Line $h={45} $fill>(2)宋代诗人苏轼对杭州西湖情有独钟，写了很多有关西湖的诗，其中</Line>
            <Line $h={45}>两句“欲<Rule $w={206} />，淡妆浓抹总</Line>
            <Line $h={45}>人还因此把西湖称为“<Rule $w={136} />”。</Line>
            <Line $h={45} $half>(3)《美丽的小兴安岭》一文按照<Rule $w={320} /></Line>
            <Line $h={45} $fill>了小兴安岭的诱人景色，它是一座<Rule $w={291} /></Line>
            <Line $h={45}><Rule $w={606} /></Line>
            <Line $h={45} $fill>(4)大自然的景物都可以写入诗歌。诗中有“月<Rule $w={204} /></Line>
            <Line $h={45} $fill><Rule $w={145} />，潭面无风镜未磨；诗中有“<Rule $w={208} /></Line>
            <Line $h={45} $fill><Rule $w={175} />；诗中有“山”：<Rule $w={288} /></Line>
            <Line $h={45} $fill $half>日边来；诗中有“云”：<Rule $w={415} /></Line>
          </Sheet>
        </Desk>
        <ScrollRail>
          <Icon s={9} c="none"><path d="M2 0h12v3l-4 4H6L2 3zM0 11h16v5H0z" fill="#777" /></Icon>
          <Icon s={9} c="none"><path d="M8 3l5 10H3z" fill="#777" /></Icon>
          <ScrollThumb />
        </ScrollRail>
        <SideBar>{sideIcons.map(([n, ic]) => <SideButton key={n} aria-label={n}>{ic}</SideButton>)}</SideBar>
      </Workspace>

      <StatusBar>
        <StatusItem $w={48}>页码: 1</StatusItem><Sep $m={6} />
        <StatusItem $w={64}>页面: 1/8</StatusItem><Sep $m={6} />
        <StatusItem $w={54}>节: 1/1</StatusItem>
        <StatusItem $w={93}>设置值: 2.5厘米</StatusItem><Sep $m={6} />
        <Gap $w={12} />
        <StatusItem $w={45}>行: 1</StatusItem>
        <StatusItem $w={41}>列: 1</StatusItem><Sep $m={6} />
        <StatusItem $w={74}>字数: 2185</StatusItem><Sep $m={6} />
        <StatusItem $w={105}>拼写检查: 关闭<Caret /></StatusItem><Sep $m={6} />
        <StatusItem $w={37}>校对</StatusItem><Sep $m={6} />
        <Gap $w={4} />
        <StatusItem $w={80}><Icon s={14} c="none"><path d="M8 1l7.500 14H.5z" fill="#f6c24a" /><path d="M7.300 6h1.400v4.500H7.300zM7.300 12h1.400v1.400H7.300z" fill="#5a3b00" /></Icon>缺失字体</StatusItem><Sep $m={6} />
        <StatusItem $w={60}>兼容模式</StatusItem>
        <Push />
        <Slot $w={34} aria-label="护眼"><Icon><path d="M.5 8C3 2 13 2 15.500 8 13 14 3 14 .5 8z" /><circle cx="8" cy="8" r="3" /></Icon></Slot>
        <Sep $m={3} />
        <Slot $w={32} aria-label="页面视图"><Icon s={14}><path d="M2 1h12v14H2zM6 8h4" /></Icon></Slot>
        <Slot $w={32} aria-label="大纲"><Icon s={14}><path d="M1 3h1M5 3h10M4 8h1M8 8h7M4 13h1M8 13h7" /></Icon></Slot>
        <Slot $w={32} aria-label="阅读"><Icon s={14}><path d="M3 1l11 7-11 7z" /></Icon></Slot>
        <Slot $w={32} aria-label="网页"><Icon s={14}><circle cx="8" cy="8" r="7" /><path d="M1 8h14M8 1c-4 4-4 10 0 14 4-4 4-10 0-14" /></Icon></Slot>
        <Slot $w={30} aria-label="批注"><Icon s={14}><path d="M3 15l1-5 8-8 2 3-7 8z" /></Icon></Slot>
        <Sep $m={5} />
        <Slot $w={32} aria-label="适应"><Icon s={14}><path d="M1 4V1h3M12 1h3v3M15 12v3h-3M4 15H1v-3M5 5h6v6H5z" /></Icon></Slot>
        <Gap $w={12} />
        <StatusItem $w={36}>110%</StatusItem>
        <Slot $w={22} aria-label="缩放列表"><Caret /></Slot>
        <Slot $w={26} aria-label="缩小"><Icon s={12} w={2}><path d="M1 8h14" /></Icon></Slot>
        <ZoomSlider type="range" aria-label="缩放" defaultValue={50} />
        <Slot $w={28} aria-label="放大"><Icon s={12} w={2}><path d="M1 8h14M8 1v14" /></Icon></Slot>
        <Slot $w={36} aria-label="全屏"><Icon s={14}><path d="M10 1h5v5M6 15H1v-5M15 1l-5 5M1 15l5-5" /></Icon></Slot>
      </StatusBar>
      <Taskbar />

      <ExplorerShade />
      <Explorer>
        <ExTitle>
          <FolderIcon /><Sep $m={2} $h={13} />
          <PageIcon w={13} h={16}><path d="M3.500 9l2.500 3 4.500-6" stroke="#e8622a" strokeWidth="1.800" /></PageIcon>
          <FolderIcon />
          <Icon s={14} c="#2f86d8" w={3}><path d="M2 2v5h5M3 6c4-5 10-3 10 2 0 3-2 5-5 6" /></Icon>
          <Icon s={7} c="#111" w={1}><path d="M2 2h12" strokeWidth="2" /><path d="M2 7h12l-6 7z" fill="#111" /></Icon>
          <Sep $m={0} $h={13} />
          <span>2</span>
          <Push />
          <Icon s={10} c="#111" w={1.600}><path d="M0 8h16" /></Icon>
        </ExTitle>
        <ExTabs>
          <ExTab $kind="file">文件</ExTab><ExTab $kind="on">主页</ExTab><ExTab>共享</ExTab><ExTab>查看</ExTab>
        </ExTabs>
        <Ribbon>
          <Group $w={255}>
            <GroupRow>
              <Big $w={64} $dim><svg width="24" height="30" viewBox="0 0 24 30"><path d="M14 4l8 7-1 3-2-1-5 6 1 5-2 2-5-5-6 7-1-1 5-8-4-4 2-2 4 0 5-6-1-2z" fill="#a9afd8" /></svg>固定到快<br />速访问</Big>
              <Big $w={30}><svg width="26" height="30" viewBox="0 0 26 30" fill="#fff" stroke="#8b9298"><path d="M1.500.500h11l3 4v17h-14z" /><path d="M10.500 8.500h11l3 4v17h-14z" /><path d="M4 6h6M4 9h5M4 12h5M4 15h5M13 15h9M13 18h9M13 21h9M13 24h9" stroke="#5aa2dc" /></svg>复制</Big>
              <PasteStack>
                <Big $w={54} $dim><svg width="22" height="30" viewBox="0 0 22 30"><rect x="1" y="4" width="20" height="26" rx="1" fill="#8fa3bf" /><rect x="3" y="7" width="16" height="20" fill="#d7e9f8" /><path d="M6 4h3l2-4 2 4h3v3H6z" fill="#a9b4c4" /><path d="M5 11h12M5 14h12M5 17h12M5 20h12M5 23h12" stroke="#9fc3e4" /></svg>粘贴</Big>
                <Small><Icon s={14} c="#7d8a94" w={1.300}><path d="M4 0l6 11M12 0L6 11" /><circle cx="4" cy="13" r="2.200" stroke="#2388d8" strokeWidth="2" /><circle cx="12" cy="13" r="2.200" stroke="#2388d8" strokeWidth="2" /></Icon>剪切</Small>
              </PasteStack>
              <Col>
                <Small><Icon s={15} c="none"><rect y="4" width="16" height="9" fill="#cde4f6" stroke="#7fa6c4" /><path d="M2 6l1.500 4L5 6l1.500 4L8 6M9.500 10h1M12 10h1" stroke="#123" /></Icon>复制路径</Small>
                <Small $dim><Icon s={15} c="none"><rect x="2" y="1" width="12" height="15" fill="#8fa3bf" /><rect x="4" y="3" width="8" height="11" fill="#eaf4fc" /><path d="M6 12c0-3 1-4 4-5M7 6h3.500v3.500" stroke="#5d8fc0" strokeWidth="1.500" /></Icon>粘贴快捷方式</Small>
              </Col>
            </GroupRow>
            <GroupName>剪贴板</GroupName>
          </Group>
          <Group $w={187}>
            <GroupRow $pad={4}>
              <Big $w={42}><svg width="28" height="30" viewBox="0 0 28 30"><path d="M2.500.500h19v17l-2 2v10h-17z" fill="#fde18f" stroke="#f1cd6a" /><path d="M27 19h-8v-5l-8 8 8 8v-5h8z" fill="#2f8be0" /></svg>移动到<Tri /></Big>
              <Big $w={42}><svg width="28" height="30" viewBox="0 0 28 30"><path d="M1.500.500h22v27l-2 2h-20z" fill="#fde18f" stroke="#f1cd6a" /><path d="M11 1h7l3 3v11H11zM15 5h7l4 4v10H15z" fill="#fff" stroke="#8b9298" /><path d="M17 10h6M17 13h7M17 16h7" stroke="#5aa2dc" /></svg>复制到<Tri /></Big>
              <Split />
              <Big $w={38}><svg width="28" height="30" viewBox="0 0 28 30"><path d="M4 3l20 24M24 3L4 27" stroke="#d2141c" strokeWidth="5" /></svg>删除<Tri /></Big>
              <Big $w={46}><svg width="30" height="30" viewBox="0 0 30 30" fill="none"><rect x="1" y="9" width="27" height="14" fill="#fff" stroke="#8b9298" /><rect x="4" y="12" width="14" height="8" fill="#2f8be0" /><path d="M18 2h10M23 2v26M18 28h10" stroke="#5c6166" strokeWidth="2" /></svg>重命名</Big>
            </GroupRow>
            <GroupName>组织</GroupName>
          </Group>
          <Group $w={137}>
            <GroupRow $pad={3}>
              <Big $w={42}><svg width="22" height="30" viewBox="0 0 22 30"><path d="M2 2h16l2 14-4 2v10l-10-1z" fill="#f4cf6e" /><path d="M2 2l10 4v24L2 26z" fill="#fde7a4" /></svg>新建<br />文件夹</Big>
              <Col>
                <Small><Icon c="none"><path d="M.5.500h8v9h-8z" fill="#9fd2f2" stroke="#4b87ad" /><path d="M5 3h6v9H5zM8.500 5.500h6v10h-6z" fill="#fff" stroke="#7b8288" /><path d="M10 9h3M10 11h3M10 13h3" stroke="#5aa2dc" /></Icon>新建项目<Tri /></Small>
                <Small><Icon c="none"><path d="M5.500.500h8l2 3v12h-10z" fill="#fff" stroke="#7b8288" /><path d="M2 3h7M0 6h7M3 9h4" stroke="#2f6fc8" strokeWidth="1.400" /></Icon>轻松访问<Tri /></Small>
              </Col>
            </GroupRow>
            <GroupName>新建</GroupName>
          </Group>
          <Group $w={127}>
            <GroupRow $pad={3}>
              <Big $w={44}><PageIcon w={24} h={30}><path d="M3.500 9l2.500 3 4.500-5.500" stroke="#e8622a" strokeWidth="1.600" /></PageIcon>属性<Tri /></Big>
              <Col>
                <Small $h={26}><Icon c="none"><rect width="16" height="16" fill="#4a2a28" /><path d="M1 4h5l2 6 2-6h5l-3 9h-2.500L8 10l-1.500 3H4z" fill="#e8352a" /></Icon>打开<Tri /></Small>
                <Small $h={26}><Icon c="none"><path d="M1.500.500h8l3 3v12h-11z" fill="#fff" stroke="#8b9298" /><path d="M5 13L13 4l2 2-8 8-3 1z" fill="#f4b04a" stroke="#b9752a" /></Icon>编辑</Small>
                <Small $h={26}><Icon c="none"><path d="M0 1h11v13H0z" fill="#fde18f" /><circle cx="11" cy="11" r="4.500" fill="#e9eeea" stroke="#777" /><path d="M3 12c0-4 3-6 6-5l1-2 1 5-4-1-1 1-1 4z" fill="#35a83c" /></Icon>历史记录</Small>
              </Col>
            </GroupRow>
            <GroupName>打开</GroupName>
          </Group>
          <Group $w={84}>
            <GroupRow $pad={4}>
              <Col>
                <Small><Icon c="#2f8be0"><path d="M.5.500h6v6h-6zM9.500.500h6v6h-6zM.5 9.500h6v6h-6zM9.500 9.500h6v6h-6z" fill="#9fd2f7" /></Icon>全部选择</Small>
                <Small><Icon c="#b0b4b8"><path d="M1.500 1.500h4v4h-4zM10.500 1.500h4v4h-4zM1.500 10.500h4v4h-4zM10.500 10.500h4v4h-4z" /></Icon>全部取消</Small>
                <Small><Icon c="#2f8be0"><path d="M9.500.500h6v6h-6zM.5 9.500h6v6h-6z" fill="#9fd2f7" /><path d="M1.500 1.500h4v4h-4zM10.500 10.500h4v4h-4z" stroke="#b0b4b8" /></Icon>反向选择</Small>
              </Col>
            </GroupRow>
            <GroupName>选择</GroupName>
          </Group>
        </Ribbon>
        <AddressRow>
          <Slot $w={22} aria-label="后退"><Icon s={13} c="#666" w={1.800}><path d="M15 8H1M7 2L1 8l6 6" /></Icon></Slot>
          <Slot $w={34} aria-label="前进"><Icon s={13} c="#d2d2d2" w={1.800}><path d="M1 8h14M9 2l6 6-6 6" /></Icon></Slot>
          <Slot $w={18} aria-label="历史"><Caret c="#777" /></Slot>
          <Slot $w={22} aria-label="上一级"><Icon s={13} c="#666" w={1.800}><path d="M8 15V1M2 7l6-6 6 6" /></Icon></Slot>
          <Address>
            <FolderIcon w={13} h={16} />
            <Crumb>«</Crumb><Crumb>上册的</Crumb><Slot $w={18} aria-label="展开"><Icon s={8} c="#444" w={2}><path d="M5 2l6 6-6 6" /></Icon></Slot>
            <Crumb>3年级</Crumb><Slot $w={16} aria-label="展开"><Icon s={8} c="#444" w={2}><path d="M5 2l6 6-6 6" /></Icon></Slot>
            <Crumb>第6单元试卷</Crumb><Slot $w={16} aria-label="展开"><Icon s={8} c="#444" w={2}><path d="M5 2l6 6-6 6" /></Icon></Slot>
            <Crumb>2</Crumb>
            <Push />
            <Slot $w={16} aria-label="地址列表"><Caret s={10} c="#555" /></Slot>
            <Sep $m={0} $h={22} />
            <Slot $w={18} aria-label="刷新"><Icon s={12} c="#555" w={1.500}><path d="M13 5a6.500 6.500 0 11-5-3M8 0v4.500h4" /></Icon></Slot>
          </Address>
          <SearchBox type="text" aria-label="搜索" placeholder="在 2 中搜索" />
        </AddressRow>
        <ExMain>
          <Tree>{folders.map(f => <TreeItem key={f.name} $root={f.root} $on={f.on}>{f.icon}{f.name}</TreeItem>)}</Tree>
          <TreeScroll>
            <Icon s={10} c="#444" w={2}><path d="M3 11l5-6 5 6" /></Icon>
            <TreeThumb />
            <Icon s={10} c="#444" w={2}><path d="M3 5l5 6 5-6" /></Icon>
          </TreeScroll>
          <Files>{files.map(([n, solid], i) => <FileRow key={n} $on={i === 0}><a href="#file"><FileDoc solid={solid} />{n}</a></FileRow>)}</Files>
        </ExMain>
        <ExStatus>10 个项目<Sep $m={10} $h={12} />选中 1 个项目<Gap $w={9} />214 KB<Sep $m={10} $h={12} /></ExStatus>
      </Explorer>

      <Stamp>
        <svg viewBox="57 42 1112 468" preserveAspectRatio="none" fill="#d8232e" aria-hidden="true">
          <path d="M206 46l18-4 864 0q14 2 13 14v20l-4 3-180-4-12 6v22l-18-2-2-16-26-6-480 2-130 4-24 4-6 16-10-6 2-20-6-8-4-10z" />
          <path d="M108 96l18-18 8 6 22-4 36 8 4 18 8 4 6-14 16-4 10 8 66 0 16 8 34-8 24-8 16-4 6 12 24 0 8-8 20-4 80 6 20 0 16 14 40-2 16-6 100-4 24 4 6 10 30-6 12-6 8 10 46 0 36-4 180-2q10 2 11 12l-2 40 4 12-2 80 4 70-3 20 3 34-1 50q-2 10-10 12l-8 14-180 0-16-6-10 4-40-6-10 8-500-4-22 2-20-4-8 4-10-10-10 8-120 4-4-8-12-8 6-26 0-90-6-12 4-18-4-70 8-14z" />
          <path d="M58 124q2-12 14-12t6 22l-6 22q6 14 4 28l4 36 6 10-4 80 6 60 2 40 6 30 10 4 12 16 40 6 10 8 24 4 30 2 2 26-152 0q-6-8-12-16l-2-90 2-100-4-60z" />
          <path d="M224 478l40-6 130 4 60-6 60 4 80 2 12-6 20 4 12-2v30l-90 2-130 6-60-4-120 0q-16-4-20-14zM658 474l60 0 64-2 4 28-40 8-60-2-30-4q-6-12 2-28zM790 476q4-10 16-12l16 10 62-2 4 32-48 2-30-6-22-6zM936 486l20-14 32 2-2 30-24 4-28-6z" />
          <path d="M1042 478q2-18 14-14t10 16-10 16-14-18zM1118 60q10-10 30-4 14 20 13 60l-8 12-14-4-4-44-14-6zM1140 132h22l6 60-4 80 4 110-6 56-30 8-5-20 3-80 0-50 6-90-2-20 8-10-6-8z" />
        </svg>
        <StampText><span>打</span><span>包</span><span>下</span><span>载</span></StampText>
      </Stamp>
    </Shell>
  );
}
